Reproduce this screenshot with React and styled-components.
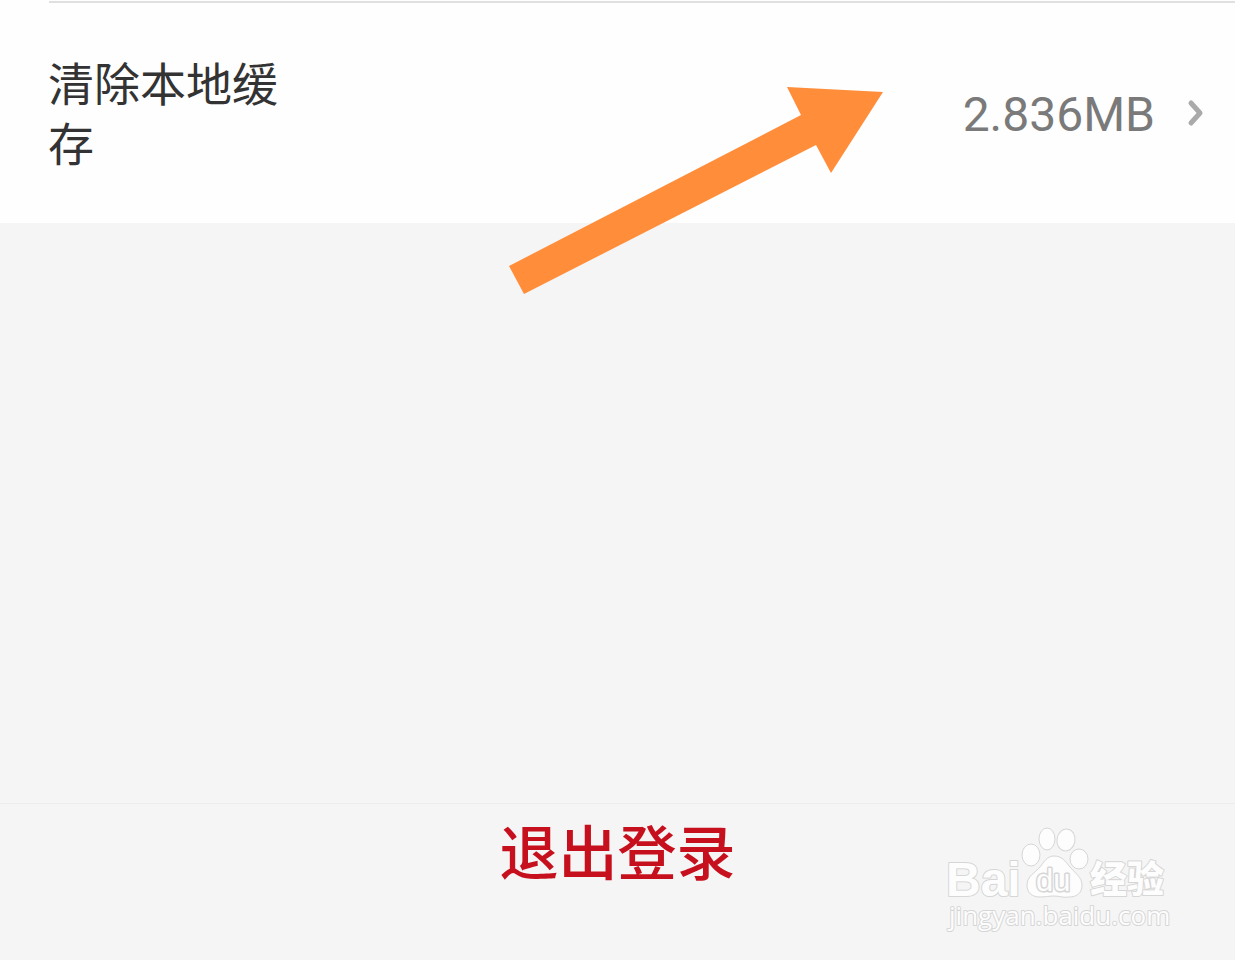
import React from "react";
import styled, { createGlobalStyle } from "styled-components";

const GlobalStyle = createGlobalStyle`
  *, *::before, *::after { box-sizing: border-box; }
  body {
    margin: 0;
    background: #f5f5f5;
    font-family: "Noto Sans CJK SC", sans-serif;
  }
`;

const Page = styled.main`
  position: relative;
  display: flex;
  flex-direction: column;
  min-height: 100vh;
  overflow: hidden;
`;

const Settings = styled.section`
  padding-top: 1px;
  background: #fefefe;
`;

const Divider = styled.hr`
  height: 2px;
  margin: 0 0 0 49px;
  border: 0;
  background: #e0e0e0;
`;

const SettingRow = styled.button`
  display: flex;
  align-items: center;
  justify-content: space-between;
  width: 100%;
  padding: 48px 30px 52px 48px;
  border: 0;
  background: transparent;
  font-family: inherit;
  text-align: left;
  cursor: pointer;
`;

const SettingLabel = styled.span`
  width: 240px;
  color: #333;
  font-size: 46px;
  line-height: 60px;
`;

const SettingValue = styled.span`
  display: flex;
  align-items: center;
  gap: 32px;
  padding-top: 4px;
`;

const CacheSize = styled.span`
  padding-top: 4px;
  color: #7a7a7a;
  font-family: Roboto, sans-serif;
  font-size: 48px;
  font-weight: 400;
  line-height: 60px;
`;

const Chevron = styled.svg`
  display: block;
  width: 18px;
  height: 28px;
`;

const Footer = styled.footer`
  margin-top: auto;
  padding-bottom: 60px;
  border-top: 1px solid #ececec;
`;

const LogoutButton = styled.button`
  display: block;
  width: 100%;
  padding: 4px 0 8px;
  border: 0;
  background: transparent;
  color: #c7101d;
  font-family: inherit;
  font-size: 59px;
  font-weight: 500;
  line-height: 84px;
  text-align: center;
  cursor: pointer;
`;

const Pointer = styled.svg`
  position: absolute;
  top: 86px;
  left: 508px;
  width: 376px;
  height: 210px;
  pointer-events: none;
`;

const Watermark = styled.svg`
  position: absolute;
  right: 60px;
  bottom: 20px;
  width: 232px;
  height: 116px;
  pointer-events: none;

  text {
    paint-order: stroke;
  }
`;

const outline = { fill: "#fdfdfd", stroke: "#d6d6d6", strokeWidth: 2, strokeLinejoin: "round" };

function BaiduMark() {
  return (
    <Watermark viewBox="0 0 232 116" role="img" aria-label="Baidu 经验 jingyan.baidu.com">
      <g {...outline}>
        <text x="3" y="72" fontFamily="Liberation Sans, sans-serif" fontWeight="700" fontSize="48">Bai</text>
        <ellipse cx="88" cy="31" rx="9" ry="11" strokeWidth="1" />
        <ellipse cx="104" cy="15" rx="8" ry="11" strokeWidth="1" />
        <ellipse cx="123" cy="16" rx="9" ry="11" strokeWidth="1" transform="rotate(10 123 16)" />
        <ellipse cx="136" cy="35" rx="9" ry="10" strokeWidth="1" />
        <path
          strokeWidth="1"
          d="M111 32C104 32 101 38 97 43C92 49 84 52 84 61C84 69 89 73 97 73C103 73 106 72 111 72C117 72 120 74 126 73C134 73 139 69 139 61C139 53 132 49 127 43C122 37 119 32 111 32Z"
        />
        <text x="93" y="67" fontFamily="Liberation Sans, sans-serif" fontSize="31" strokeWidth="3">du</text>
        <text x="147" y="69" fontFamily="Noto Sans CJK SC, sans-serif" fontWeight="900" fontSize="37">经验</text>
        <text x="6" y="101" fontFamily="Open Sans, sans-serif" fontSize="26">jingyan.baidu.com</text>
      </g>
    </Watermark>
  );
}

export default function App() {
  return (
    <>
      <GlobalStyle />
      <Page>
        <Settings>
          <Divider />
          <SettingRow type="button">
            <SettingLabel>清除本地缓存</SettingLabel>
            <SettingValue>
              <CacheSize>2.836MB</CacheSize>
              <Chevron viewBox="0 0 18 28" aria-hidden="true">
                <path d="M4 4L13 14L4 24" fill="none" stroke="#aaa" strokeWidth="5" strokeLinecap="round" strokeLinejoin="round" />
              </Chevron>
            </SettingValue>
          </SettingRow>
        </Settings>
        <Footer>
          <LogoutButton type="button">退出登录</LogoutButton>
        </Footer>
        <Pointer viewBox="0 0 376 210" aria-hidden="true">
          <path d="M279 1L375 6L323 87L308 59L16 208L1 180L293 29Z" fill="#ff8d3a" />
        </Pointer>
        <BaiduMark />
      </Page>
    </>
  );
}
